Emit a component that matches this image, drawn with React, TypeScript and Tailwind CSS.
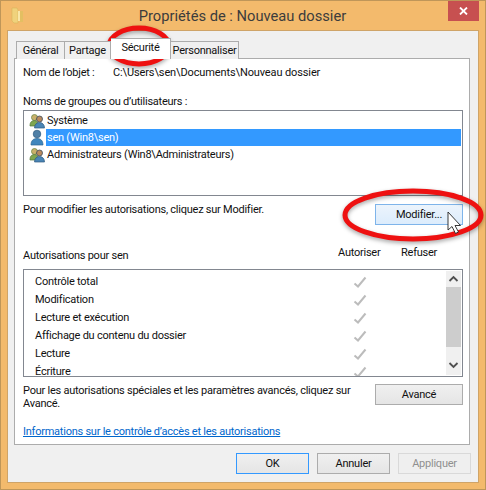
import React from "react";

const font = { fontFamily: 'Roboto, "Noto Sans", sans-serif' };

function Users() {
  return (
    <svg width="16" height="16" viewBox="0 0 16 16" className="shrink-0">
      <circle cx="5.500" cy="4.500" r="3" fill="#c9b06a" stroke="#6f8a4a" strokeWidth="0.8" />
      <path d="M1 12c0-3 2-4.500 4.500-4.500S9 9 9 12v1H1z" fill="#7fa650" stroke="#55753a" strokeWidth="0.7" />
      <circle cx="10.500" cy="6" r="3" fill="#b98a5e" stroke="#3d4c5c" strokeWidth="0.8" />
      <path d="M5.500 15c0-3.500 2.200-5.500 5-5.500s5 2 5 5.500z" fill="#4a85b5" stroke="#2f5a80" strokeWidth="0.7" />
    </svg>
  );
}

function User() {
  return (
    <svg width="16" height="17" viewBox="0 0 16 17" className="shrink-0">
      <circle cx="8" cy="5" r="3.800" fill="#4f7fa6" stroke="#2f5a80" strokeWidth="0.7" />
      <path d="M2 16c0-4.500 2.500-6.500 6-6.500s6 2 6 6.500z" fill="#3f86bd" stroke="#2b6593" strokeWidth="0.7" />
    </svg>
  );
}

function Check() {
  return (
    <svg width="14" height="13" viewBox="0 0 14 13" className="block">
      <path d="M1.500 7.500L5 10.500L12.500 1.500" fill="none" stroke="#bcbcbc" strokeWidth="2" />
    </svg>
  );
}

function Btn({ children, w, cls }: { children: React.ReactNode; w: string; cls?: string }) {
  return (
    <div className={`${w} flex items-center justify-center border ${cls ?? "border-[#acacac] bg-gradient-to-b from-[#f0f0f0] to-[#e5e5e5] text-[#111]"}`}>
      {children}
    </div>
  );
}

const perms = ["Contrôle total", "Modification", "Lecture et exécution", "Affichage du contenu du dossier", "Lecture", "Écriture"];

export default function App() {
  return (
    <div style={font} className="relative w-[486px] h-[490px] overflow-hidden bg-[#f3ba6c] border border-[#bf9659] text-[11px] tracking-[-0.24px] leading-[14px] text-[#111]">
      {/* Title bar */}
      <div className="relative h-[29px] flex items-center justify-center">
        <svg width="14" height="17" viewBox="0 0 14 17" className="absolute left-[10px] top-[6px]">
          <path d="M1 1h5l1 2v13H3L1 14z" fill="#f0d27c" stroke="#d9b65c" strokeWidth="0.6" />
          <path d="M7 4h5v10H7z" fill="#f9e6a8" />
          <path d="M9 4h3v11H9z" fill="#e3bf62" />
        </svg>
        <span className="text-[14.7px] tracking-normal text-[#3c3c3c] ml-[-1px] mt-[1px]">Propriétés de : Nouveau dossier</span>
        <div className="absolute right-[6px] top-0 w-[31px] h-[20px] bg-[#c75050] flex items-center justify-center">
          <svg width="9" height="8" viewBox="0 0 9 8">
            <path d="M1 0.500L8 7.500M8 0.500L1 7.500" stroke="#fff" strokeWidth="1.800" />
          </svg>
        </div>
      </div>

      {/* Client area */}
      <div className="mx-[6px] h-[453px] border border-[#cfa468] bg-[#f0f0f0] flex flex-col">
        <div className="pl-[6px] pr-[8px] pt-[7px] w-full flex flex-col">
          {/* Tabs */}
          <div className="relative z-10 h-[21px] flex items-end pl-[2px] mb-[-1px]">
            <div className="h-[18px] w-[49px] border border-[#acacac] border-b-0 bg-[#f0f0f0] flex items-center justify-center">Général</div>
            <div className="h-[18px] w-[46px] border border-[#acacac] border-b-0 border-l-0 bg-[#f0f0f0] flex items-center justify-center">Partage</div>
            <div className="h-[21px] w-[60px] border border-[#acacac] border-b-0 border-l-0 bg-white flex items-center justify-center pb-[3px]">Sécurité</div>
            <div className="h-[18px] w-[68px] border border-[#acacac] border-b-0 border-l-0 bg-[#f0f0f0] flex items-center justify-center">Personnaliser</div>
          </div>

          {/* Panel */}
          <div className="h-[387px] border border-[#acacac] bg-white pl-[8px] pr-[6px] flex flex-col">
            <div className="flex mt-[7px] h-[14px] items-center">
              <span className="w-[90px]">Nom de l’objet :</span>
              <span className="tracking-[-0.12px]">C:\Users\sen\Documents\Nouveau dossier</span>
            </div>
            <div className="mt-[15px] h-[14px]">Noms de groupes ou d’utilisateurs :</div>

            <div className="mt-[1px] h-[86px] border border-[#828790] flex flex-col pt-[1px] pr-[1px]">
              <div className="h-[17px] flex items-center pl-[5px] gap-[1px]">
                <Users />
                <span className="pl-[1px]">Système</span>
              </div>
              <div className="h-[17px] flex items-center pl-[5px]">
                <User />
                <div className="flex-1 h-[17px] ml-[1px] pl-[1px] bg-[#3399ff] text-white flex items-center">sen (Win8\sen)</div>
              </div>
              <div className="h-[17px] flex items-center pl-[5px] gap-[1px]">
                <Users />
                <span className="pl-[1px]">Administrateurs (Win8\Administrateurs)</span>
              </div>
            </div>

            <div className="flex justify-between mt-[8px] h-[21px]">
              <span className="mt-[-1px]">Pour modifier les autorisations, cliquez sur Modifier.</span>
              <Btn w="w-[88px]" cls="border-[#7eb4ea] bg-gradient-to-b from-[#ecf4fc] to-[#dcecfc] text-[#111]">Modifier...</Btn>
            </div>

            <div className="flex mt-[21px] h-[18px]">
              <span className="flex-1 mt-[3px]">Autorisations pour sen</span>
              <span className="w-[63px]">Autoriser</span>
              <span className="w-[62px]">Refuser</span>
            </div>

            <div className="mt-[5px] h-[108px] border border-[#828790] flex overflow-hidden">
              <div className="flex-1 flex flex-col pt-[3px]">
                {perms.map((p) => (
                  <div key={p} className="relative h-[18px] shrink-0 flex items-center pl-[11px]">
                    <span>{p}</span>
                    <div className="absolute left-[329px] top-[3px]"><Check /></div>
                  </div>
                ))}
              </div>
              <div className="w-[15px] mr-[1px] my-[1px] bg-[#f0f0f0] flex flex-col items-center">
                <svg width="15" height="16" viewBox="0 0 15 16"><path d="M3.500 10L7.500 6L11.500 10" fill="none" stroke="#505050" strokeWidth="1.800" /></svg>
                <div className="w-[15px] h-[60px] bg-[#cdcdcd]" />
                <div className="flex-1" />
                <svg width="15" height="16" viewBox="0 0 15 16" className="mb-[2px]"><path d="M3.500 6L7.500 10L11.500 6" fill="none" stroke="#505050" strokeWidth="1.800" /></svg>
              </div>
            </div>

            <div className="flex justify-between mt-[7px]">
              <span className="w-[340px] leading-[13px]">Pour les autorisations spéciales et les paramètres avancés, cliquez sur Avancé.</span>
              <Btn w="w-[88px] h-[21px]">Avancé</Btn>
            </div>

            <div className="mt-[15px] text-[#0066cc] underline">Informations sur le contrôle d’accès et les autorisations</div>
          </div>

          {/* Bottom buttons */}
          <div className="flex justify-end gap-[8px] mt-[8px] mr-[-1px]">
            <Btn w="w-[73px] h-[21px]" cls="border-[#3399ff] bg-gradient-to-b from-[#f0f0f0] to-[#e5e5e5]">OK</Btn>
            <Btn w="w-[73px] h-[21px]">Annuler</Btn>
            <Btn w="w-[73px] h-[21px]" cls="border-[#d9d9d9] bg-[#efefef] text-[#8f8f8f]">Appliquer</Btn>
          </div>
        </div>
      </div>

      {/* Annotations */}
      <svg width="486" height="490" viewBox="0 0 486 490" className="absolute left-[-1px] top-[-1px] pointer-events-none">
        <defs>
          <filter id="s" x="-20%" y="-40%" width="140%" height="180%"><feGaussianBlur stdDeviation="2" /></filter>
        </defs>
        <ellipse cx="139" cy="48" rx="30" ry="18" fill="none" stroke="#000" strokeOpacity="0.35" strokeWidth="5" filter="url(#s)" />
        <ellipse cx="139" cy="46" rx="30" ry="18" fill="none" stroke="#ee1111" strokeWidth="5" />
        <ellipse cx="413" cy="217" rx="68" ry="24" fill="none" stroke="#000" strokeOpacity="0.35" strokeWidth="5" filter="url(#s)" />
        <ellipse cx="413" cy="215" rx="68" ry="24" fill="none" stroke="#ee1111" strokeWidth="5" />
        <path d="M448 212V230L452 226.500L455.500 233.500L458.500 232L455 225.500H460.500z" fill="#fff" stroke="#222" strokeWidth="0.9" />
      </svg>
    </div>
  );
}
